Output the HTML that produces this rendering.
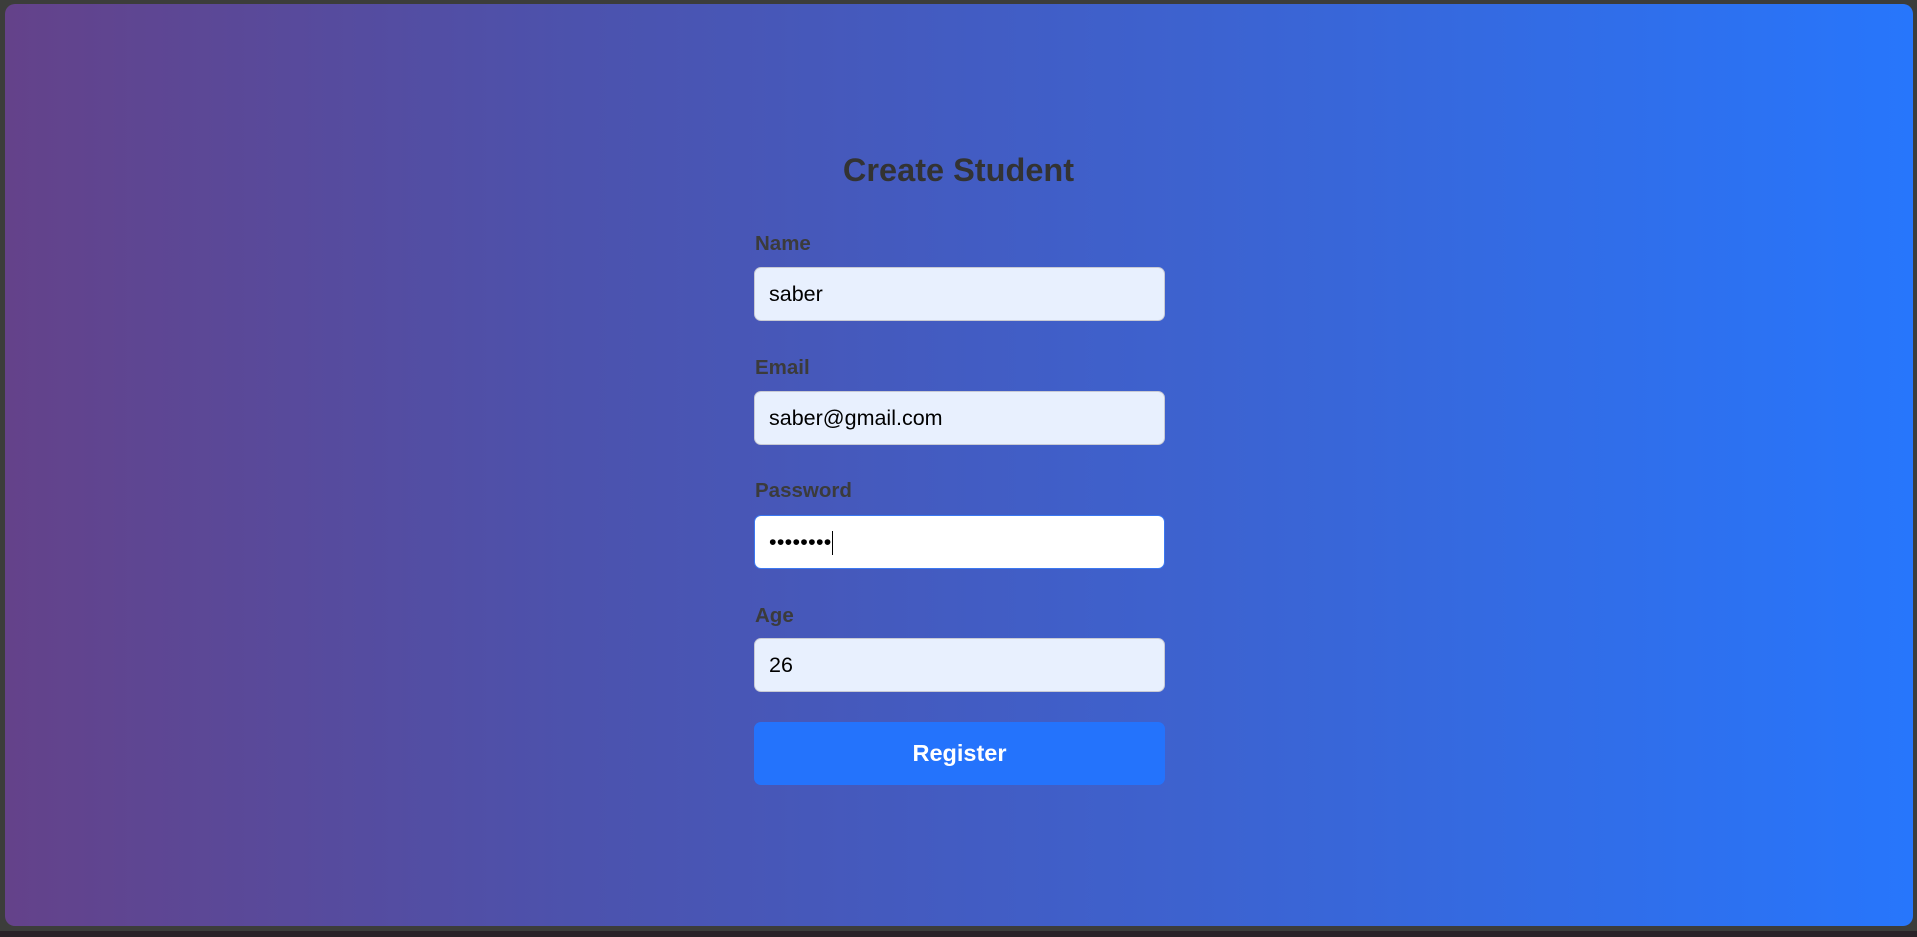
<!DOCTYPE html>
<html><head><meta charset="utf-8"><style>
html,body{margin:0;padding:0;width:1917px;height:937px;overflow:hidden;background:#3c3d3b;}
.card{position:absolute;left:5px;top:4px;width:1908px;height:922px;border-radius:10px;
background:linear-gradient(90deg,#64428a 0%,#4c52ad 30%,#3d62cf 62%,#2776fc 100%);}
.strip{position:absolute;left:0;top:931px;width:1917px;height:6px;background:#2a2228;}
h1{position:absolute;left:0;width:1917px;top:148px;margin:0;text-align:center;font:bold 32.5px "Liberation Sans",sans-serif;color:#333;line-height:44px;}
.lbl{position:absolute;left:755px;font:bold 20.5px "Liberation Sans",sans-serif;color:#3b3b3b;line-height:24px;}
.inp{position:absolute;left:754px;height:52px;border:1px solid #c8cad4;border-radius:7px;background:#e8f0fe;
font:21.5px "Liberation Sans",sans-serif;color:#000;line-height:52px;padding-left:14px;box-sizing:content-box;width:395px;}
.btn{position:absolute;left:754px;top:722px;width:411px;height:63px;border-radius:7px;background:#2473fc;color:#fff;
font:bold 23.5px "Liberation Sans",sans-serif;text-align:center;line-height:63px;}
</style></head><body>
<div class="card"></div>
<div class="strip"></div>
<h1>Create Student</h1>
<div class="lbl" style="top:232px">Name</div>
<div class="inp" style="top:267px">saber</div>
<div class="lbl" style="top:356px">Email</div>
<div class="inp" style="top:391px">saber@gmail.com</div>
<div class="lbl" style="top:479px">Password</div>
<div class="inp" style="top:515px;background:#fff;border-color:#3b78f0;letter-spacing:0.3px">••••••••<span style="display:inline-block;width:1px;height:24px;background:#000;vertical-align:middle;margin-left:0px"></span></div>
<div class="lbl" style="top:604px">Age</div>
<div class="inp" style="top:638px">26</div>
<div class="btn">Register</div>
</body></html>
